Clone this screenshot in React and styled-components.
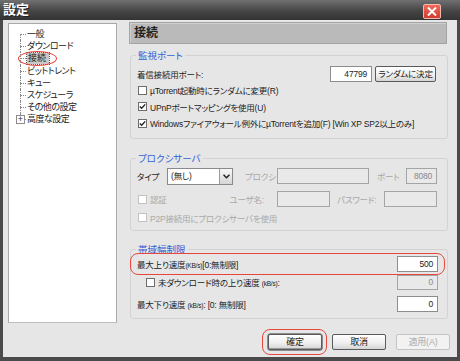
import React from "react";
import styled, { createGlobalStyle } from "styled-components";

const GlobalStyle = createGlobalStyle`
  html, body {
    margin: 0;
    padding: 0;
    background: #fff;
  }
  body {
    font-family: "Liberation Sans", "Noto Sans CJK JP", sans-serif;
    font-size: 8.5px;
    letter-spacing: -0.2px;
    font-feature-settings: "palt";
    color: #1c1c1c;
  }
`;

const Window = styled.div`
  width: 460px;
  height: 361px;
  display: flex;
  flex-direction: column;
  background: #4a4a4a;
`;

const TitleBar = styled.div`
  height: 20px;
  flex: none;
  display: flex;
  justify-content: space-between;
  padding: 0 19px 0 3px;
  background: linear-gradient(#707070, #454545 55%, #333);
  color: #fff;
  font-size: 13px;
  font-weight: bold;
  letter-spacing: 0;
  line-height: 20px;
  text-shadow: 1px 1px 0 #222;
`;

const CloseButton = styled.div`
  width: 18px;
  height: 15px;
  margin-top: 4px;
  box-sizing: border-box;
  border: 1px solid #f3b9ad;
  border-radius: 2px;
  background: linear-gradient(#f06a5c, #d23a2e);
  display: flex;
  align-items: center;
  justify-content: center;
`;

const Client = styled.div`
  flex: 1;
  margin: 0 3px 4px;
  background: #e6e6e6;
  display: flex;
  flex-direction: column;
  padding: 3px 7px 0 5px;
`;

const Main = styled.div`
  display: flex;
  gap: 12px;
  height: 300px;
`;

const Tree = styled.div`
  width: 109px;
  flex: none;
  box-sizing: border-box;
  background: #fff;
  border: 1px solid #a9a9a9;
  border-bottom-color: #bdbdbd;
  padding-top: 4px;
`;

const TreeItem = styled.div`
  position: relative;
  height: 12.2px;
  line-height: 12.2px;
  padding-left: 18px;
  font-size: 9px;
  letter-spacing: -0.5px;
  white-space: nowrap;

  &::before {
    content: "";
    position: absolute;
    left: ${(p) => (p.$plus ? 16 : 11)}px;
    top: 6px;
    width: ${(p) => (p.$plus ? 1 : 6)}px;
    border-top: 1px dotted #8a8a8a;
  }

  &::after {
    content: "";
    position: absolute;
    left: 11px;
    top: ${(p) => (p.$first ? 6 : 0)}px;
    height: ${(p) => (p.$plus ? 2 : p.$first ? 6.2 : 12.2)}px;
    border-left: 1px dotted #8a8a8a;
  }
`;

const TreeLabel = styled.span`
  position: relative;
  display: inline-block;
  padding: 0 ${(p) => (p.$selected ? 3 : 0)}px 0 ${(p) => (p.$selected ? 1 : 0)}px;
  letter-spacing: ${(p) => (p.$selected ? "0" : "inherit")};
  line-height: 11px;
  background: ${(p) => (p.$selected ? "#c9c9c9" : "transparent")};
  outline: ${(p) => (p.$selected ? "1px dotted #555" : "none")};
`;

const PlusBox = styled.span`
  position: absolute;
  left: 7px;
  top: 2px;
  width: 9px;
  height: 9px;
  box-sizing: border-box;
  border: 1px solid #8c8c8c;
  background: #fff;
  font-size: 9px;
  letter-spacing: 0;
  line-height: 7px;
  text-align: center;
  color: #333;
`;

const Ring = styled.span`
  position: absolute;
  top: ${(p) => p.$t}px;
  right: ${(p) => p.$r}px;
  bottom: ${(p) => p.$b}px;
  left: ${(p) => p.$l}px;
  border: 1.5px solid #e8463d;
  border-radius: ${(p) => p.$radius};
  pointer-events: none;
`;

const Panel = styled.div`
  flex: 1;
  margin-right: 2px;
  display: flex;
  flex-direction: column;
`;

const Header = styled.div`
  height: 22px;
  box-sizing: border-box;
  margin-top: -1px;
  margin-right: 1px;
  border: 1px solid #a3a3a3;
  background: #bababa;
  box-shadow: inset 1px 1px 0 #cfcfcf;
  padding-left: 4px;
  font-size: 12px;
  font-weight: bold;
  letter-spacing: 0;
  line-height: 20px;
  color: #222;
`;

const Group = styled.fieldset`
  margin: ${(p) => p.$top}px 0 0 1px;
  padding: ${(p) => p.$pt}px ${(p) => p.$pr}px ${(p) => p.$pb}px 6px;
  border: 1px solid #d2d2d2;
  border-radius: 3px;
  min-width: 0;
`;

const Legend = styled.legend`
  padding: 0 2px;
  margin-left: -1px;
  font-size: 9.5px;
  letter-spacing: 0;
  line-height: 11px;
  color: #3162d4;
`;

const Row = styled.div`
  position: relative;
  display: flex;
  align-items: center;
  height: ${(p) => p.$h || 17}px;
  margin-top: ${(p) => p.$mt || 0}px;
  white-space: nowrap;
`;

const Label = styled.span`
  display: inline-block;
  flex: none;
  width: ${(p) => (p.$w ? `${p.$w}px` : "auto")};
  margin-left: ${(p) => p.$ml || 0}px;
  text-align: ${(p) => (p.$right ? "right" : "left")};
  color: ${(p) => (p.$disabled ? "#a9a9a9" : "#1c1c1c")};
`;

const Small = styled.span`
  font-size: 6.5px;
`;

const Spacer = styled.span`
  flex: 1;
`;

const Input = styled.div`
  flex: none;
  width: ${(p) => p.$w}px;
  height: ${(p) => p.$h || 16}px;
  margin-left: ${(p) => p.$ml || 0}px;
  box-sizing: border-box;
  border: 1px solid ${(p) => (p.$disabled ? "#a5a5a5" : "#8d8d8d")};
  background: ${(p) => (p.$disabled ? "#e9e9e9" : "#fff")};
  color: ${(p) => (p.$muted ? "#8a8a8a" : "#1c1c1c")};
  padding: 0 4px;
  text-align: right;
  line-height: ${(p) => (p.$h || 16) - 2}px;
`;

const Select = styled.div`
  display: flex;
  width: 66px;
  height: 17px;
  box-sizing: border-box;
  border: 1px solid #8a8a8a;
  background: #fff;
  line-height: 15px;
`;

const SelectValue = styled.span`
  flex: 1;
  padding-left: 3px;
`;

const SelectArrow = styled.span`
  width: 12px;
  display: flex;
  align-items: center;
  justify-content: center;
  border-left: 1px solid #9a9a9a;
  background: linear-gradient(#f7f7f7, #d6d6d6);
`;

const Check = styled.span`
  flex: none;
  width: 9px;
  height: 9px;
  box-sizing: border-box;
  margin: 0 3px 0 ${(p) => p.$ml || 1}px;
  border: 1px solid ${(p) => (p.$disabled ? "#c2c2c2" : "#6c6c6c")};
  background: #fff;
  display: flex;
  align-items: center;
  justify-content: center;
`;

const Button = styled.div`
  flex: none;
  width: ${(p) => p.$w}px;
  height: 16px;
  box-sizing: border-box;
  margin-left: ${(p) => p.$ml || 0}px;
  border: 1px solid ${(p) => (p.$disabled ? "#c4c4c4" : "#5a5a5a")};
  border-radius: 2px;
  background: ${(p) =>
    p.$disabled ? "#f2f2f2" : "linear-gradient(#ffffff, #eeeeee 60%, #d4d4d4)"};
  box-shadow: ${(p) => (p.$default ? "inset 0 -1px 0 #9a9a9a, 0 0 0 0.5px #333" : "none")};
  color: ${(p) => (p.$disabled ? "#acacac" : "#1c1c1c")};
  text-align: center;
  line-height: 14px;
`;

const Footer = styled.div`
  display: flex;
  justify-content: flex-end;
  gap: 10px;
  margin-top: 11px;
  font-size: 9px;
`;

const Wrap = styled.span`
  position: relative;
  display: inline-flex;
`;

function CheckMark({ on, disabled, ml }) {
  return (
    <Check $ml={ml} $disabled={disabled}>
      {on && (
        <svg width="7" height="7" viewBox="0 0 7 7">
          <path d="M0.8 3.4 L2.7 5.3 L6.2 1.4" fill="none" stroke="#222" strokeWidth="1.4" />
        </svg>
      )}
    </Check>
  );
}

const treeItems = ["一般", "ダウンロード", "接続", "ビットトレント", "キュー", "スケジューラ", "その他の設定"];

export default function App() {
  return (
    <>
      <GlobalStyle />
      <Window>
        <TitleBar>
          <span>設定</span>
          <CloseButton>
            <svg width="10" height="9" viewBox="0 0 10 9">
              <path d="M1 0.5 L9 8.5 M9 0.5 L1 8.5" stroke="#fff" strokeWidth="2" />
            </svg>
          </CloseButton>
        </TitleBar>
        <Client>
          <Main>
            <Tree>
              {treeItems.map((name, i) => (
                <TreeItem key={name} $first={i === 0}>
                  <TreeLabel $selected={name === "接続"}>
                    {name}
                    {name === "接続" && <Ring $t={-2} $r={-8} $b={-2} $l={-9} $radius="50%" />}
                  </TreeLabel>
                </TreeItem>
              ))}
              <TreeItem $plus>
                <PlusBox>+</PlusBox>
                <TreeLabel>高度な設定</TreeLabel>
              </TreeItem>
            </Tree>

            <Panel>
              <Header>接続</Header>

              <Group $top={6} $pt={4} $pr={11} $pb={6}>
                <Legend>監視ポート</Legend>
                <Row>
                  <Label>着信接続用ポート:</Label>
                  <Spacer />
                  <Input $w={42}>47799</Input>
                  <Button $w={61} $ml={3}>ランダムに決定</Button>
                </Row>
                <Row $h={16.5}>
                  <CheckMark />
                  <Label>µTorrent起動時にランダムに変更(R)</Label>
                </Row>
                <Row $h={16.5}>
                  <CheckMark on />
                  <Label>UPnPポートマッピングを使用(U)</Label>
                </Row>
                <Row $h={16.5}>
                  <CheckMark on />
                  <Label>Windowsファイアウォール例外にµTorrentを追加(F) [Win XP SP2以上のみ]</Label>
                </Row>
              </Group>

              <Group $top={14} $pt={4} $pr={10} $pb={4}>
                <Legend>プロクシサーバ</Legend>
                <Row>
                  <Label $w={30}>タイプ</Label>
                  <Select>
                    <SelectValue>(無し)</SelectValue>
                    <SelectArrow>
                      <svg width="7" height="5" viewBox="0 0 7 5">
                        <path d="M0.5 0.8 L3.5 3.8 L6.5 0.8" fill="none" stroke="#222" strokeWidth="1.5" />
                      </svg>
                    </SelectArrow>
                  </Select>
                  <Label $w={32} $ml={12} $disabled>プロクシ</Label>
                  <Input $w={92} $disabled />
                  <Label $ml={8} $disabled>ポート</Label>
                  <Spacer />
                  <Input $w={31} $disabled $muted>8080</Input>
                </Row>
                <Row $mt={6}>
                  <CheckMark disabled />
                  <Label $w={50} $disabled>認証</Label>
                  <Label $w={64} $right $disabled>ユーザ名:</Label>
                  <Input $w={53} $ml={13} $disabled />
                  <Label $ml={7} $disabled>パスワード:</Label>
                  <Spacer />
                  <Input $w={53} $disabled />
                </Row>
                <Row $h={16} $mt={2}>
                  <CheckMark disabled />
                  <Label $disabled>P2P接続用にプロクシサーバを使用</Label>
                </Row>
              </Group>

              <Group $top={13} $pt={1} $pr={9} $pb={5}>
                <Legend>帯域幅制限</Legend>
                <Row>
                  <Label>
                    最大上り速度<Small>(KB/s)</Small>[0:無制限]
                  </Label>
                  <Spacer />
                  <Input $w={41}>500</Input>
                  <Ring $t={-3} $r={-7} $b={-2} $l={-7} $radius="8px" />
                </Row>
                <Row $mt={1}>
                  <CheckMark ml={9} />
                  <Label>
                    未ダウンロード時の上り速度 <Small>(kB/s)</Small>:
                  </Label>
                  <Spacer />
                  <Input $w={41} $h={15} $disabled $muted>0</Input>
                </Row>
                <Row $h={18} $mt={4}>
                  <Label>
                    最大下り速度 <Small>(kB/s)</Small>: [0: 無制限]
                  </Label>
                  <Spacer />
                  <Input $w={41}>0</Input>
                </Row>
              </Group>
            </Panel>
          </Main>

          <Footer>
            <Wrap>
              <Button $w={54} $default>確定</Button>
              <Ring $t={-5} $r={-5} $b={-5} $l={-6} $radius="8px" />
            </Wrap>
            <Button $w={54}>取消</Button>
            <Button $w={54} $disabled>適用(A)</Button>
          </Footer>
        </Client>
      </Window>
    </>
  );
}
